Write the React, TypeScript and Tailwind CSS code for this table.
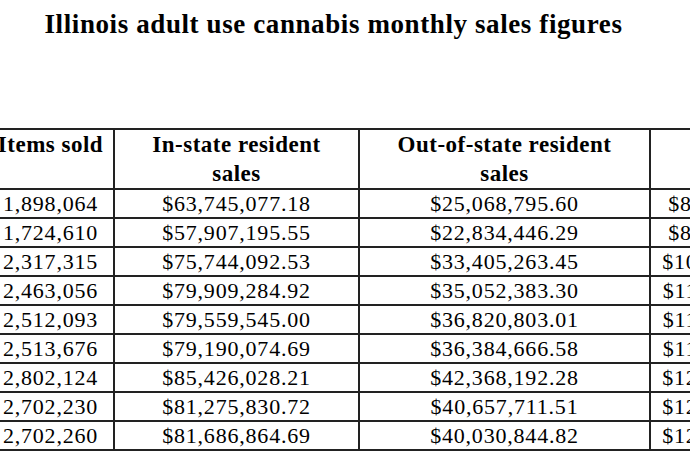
import React from 'react'

const rows = [
    ['1,898,064', '$63,745,077.18', '$25,068,795.60', '$88,813,872.78'],
    ['1,724,610', '$57,907,195.55', '$22,834,446.29', '$80,741,641.84'],
    ['2,317,315', '$75,744,092.53', '$33,405,263.45', '$109,149,355.98'],
    ['2,463,056', '$79,909,284.92', '$35,052,383.30', '$114,961,668.22'],
    ['2,512,093', '$79,559,545.00', '$36,820,803.01', '$116,380,348.01'],
    ['2,513,676', '$79,190,074.69', '$36,384,666.58', '$115,574,741.27'],
    ['2,802,124', '$85,426,028.21', '$42,368,192.28', '$127,794,220.49'],
    ['2,702,230', '$81,275,830.72', '$40,657,711.51', '$121,933,542.23'],
    ['2,702,260', '$81,686,864.69', '$40,030,844.82', '$121,717,709.51'],
]

export default function App() {
    return (
        <div
            className="w-[690px] h-[472px] overflow-hidden bg-white text-black"
            style={{ fontFamily: '"Liberation Serif", "Times New Roman", serif' }}
        >
            <div className="w-[667px] pt-[9px] text-center">
                <h1 className="text-[27px] leading-[30px] font-bold tracking-[0.6px] whitespace-nowrap">
                    Illinois adult use cannabis monthly sales figures
                </h1>
            </div>

            <table className="ml-[-14px] mt-[89px] w-[848px] table-fixed border-collapse">
                <colgroup>
                    <col className="w-[127px]" />
                    <col className="w-[245px]" />
                    <col className="w-[291px]" />
                    <col className="w-[185px]" />
                </colgroup>
                <thead>
                    <tr className="h-[57px]">
                        {['Items sold', 'In-state resident sales', 'Out-of-state resident sales', 'Total sales'].map((h) => (
                            <th
                                key={h}
                                className="border-2 border-[#222] p-0 align-top text-center text-[23px] leading-[29px] font-bold tracking-[0.5px]"
                            >
                                {h === 'Total sales' ? '' : h === 'Items sold' ? h : (
                                    <>
                                        {h.replace(' sales', '')}
                                        <br />
                                        sales
                                    </>
                                )}
                            </th>
                        ))}
                    </tr>
                </thead>
                <tbody>
                    {rows.map((r) => (
                        <tr key={r[0] + r[1]} className="h-[29px]">
                            {r.map((c, i) => (
                                <td
                                    key={i}
                                    className="border-2 border-[#222] p-0 text-center text-[22px] leading-[25px] tracking-[0.8px] whitespace-nowrap"
                                >
                                    {c}
                                </td>
                            ))}
                        </tr>
                    ))}
                </tbody>
            </table>
        </div>
    )
}
